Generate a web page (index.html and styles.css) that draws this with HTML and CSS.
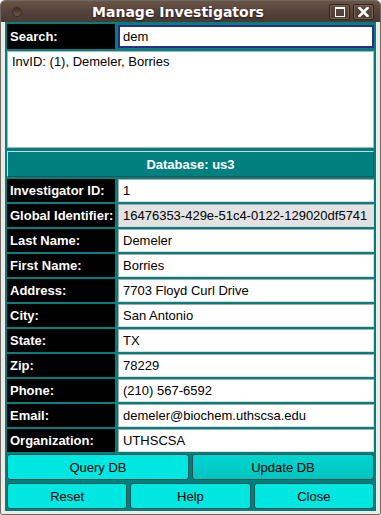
FILE: index.html
```html
<!DOCTYPE html>
<html lang="en">
<head>
    <meta charset="UTF-8">
    <meta name="viewport" content="width=device-width, initial-scale=1.0">
    <title>Manage Investigators</title>
    <link rel="stylesheet" href="styles.css">
</head>
<body>
    <div class="window">
        <div class="titlebar">
            <span class="menu-dot"></span>
            <span class="title">Manage Investigators</span>
            <div class="win-buttons">
                <span class="win-btn"><span class="max-box"></span></span>
                <span class="win-btn">
                    <svg width="11" height="10" viewBox="0 0 11 10">
                        <path d="M1.5 1 L9.5 9 M9.5 1 L1.5 9" stroke="#ffffff" stroke-width="2.6" stroke-linecap="square" fill="none"/>
                    </svg>
                </span>
            </div>
        </div>

        <div class="frame">
            <div class="panel">
                <div class="row search-row">
                    <span class="label">Search:</span>
                    <div class="field search-field">dem</div>
                </div>

                <div class="list-box">
                    <div class="list-item">InvID: (1), Demeler, Borries</div>
                </div>

                <div class="db-header">Database: us3</div>

                <div class="rows">
                    <div class="row"><span class="label">Investigator ID:</span><div class="field">1</div></div>
                    <div class="row"><span class="label">Global Identifier:</span><div class="field readonly">16476353-429e-51c4-0122-129020df5741</div></div>
                    <div class="row"><span class="label">Last Name:</span><div class="field">Demeler</div></div>
                    <div class="row"><span class="label">First Name:</span><div class="field">Borries</div></div>
                    <div class="row"><span class="label">Address:</span><div class="field">7703 Floyd Curl Drive</div></div>
                    <div class="row"><span class="label">City:</span><div class="field">San Antonio</div></div>
                    <div class="row"><span class="label">State:</span><div class="field">TX</div></div>
                    <div class="row"><span class="label">Zip:</span><div class="field">78229</div></div>
                    <div class="row"><span class="label">Phone:</span><div class="field">(210) 567-6592</div></div>
                    <div class="row"><span class="label">Email:</span><div class="field">demeler@biochem.uthscsa.edu</div></div>
                    <div class="row"><span class="label">Organization:</span><div class="field">UTHSCSA</div></div>
                </div>

                <div class="buttons two">
                    <button>Query DB</button>
                    <button class="hover">Update DB</button>
                </div>
                <div class="buttons three">
                    <button>Reset</button>
                    <button>Help</button>
                    <button>Close</button>
                </div>
            </div>
        </div>
    </div>
</body>
</html>
```

FILE: styles.css
```css
body {
    margin: 0;
    padding: 0;
    background-color: #ffffff;
    font-family: "Liberation Sans", Arial, sans-serif;
    font-size: 13px;
}

.window {
    width: 381px;
    height: 515px;
    box-sizing: border-box;
    border: 1px solid #6e6a64;
    border-radius: 5px 5px 2px 2px;
    background-color: #edebe7;
    overflow: hidden;
    display: flex;
    flex-direction: column;
}

.titlebar {
    height: 21px;
    flex: none;
    position: relative;
    display: flex;
    align-items: center;
    justify-content: center;
    background: linear-gradient(#6a5446, #55423a 50%, #4b3a32);
}

.menu-dot {
    position: absolute;
    left: 11px;
    top: 6px;
    width: 10px;
    height: 10px;
    border-radius: 50%;
    background: linear-gradient(#3e2f27, #6c5848);
    border: 1px solid #3a2c25;
    box-sizing: border-box;
}

.title {
    color: #ffffff;
    font-family: "DejaVu Sans", sans-serif;
    font-weight: bold;
    font-size: 14px;
    text-shadow: 0 1px 2px #1e1410;
    margin-left: -25px;
}

.win-buttons {
    position: absolute;
    right: 6px;
    top: 3px;
    display: flex;
    gap: 3px;
}

.win-btn {
    width: 21px;
    height: 16px;
    box-sizing: border-box;
    border: 1px solid #2e231e;
    box-shadow: inset 0 0 0 1px #7a6456;
    border-radius: 2px;
    display: flex;
    align-items: center;
    justify-content: center;
}

.max-box {
    width: 8px;
    height: 7px;
    border: 1px solid #ffffff;
    border-top-width: 2px;
}

.frame {
    flex: 1;
    padding: 0 4px 3px 4px;
    display: flex;
}

.panel {
    flex: 1;
    background-color: #007f7f;
    padding: 2px;
    display: flex;
    flex-direction: column;
}

.row {
    display: flex;
    gap: 3px;
    height: 23px;
}

.search-row {
    height: 25px;
}

.label {
    width: 108px;
    flex: none;
    background-color: #000000;
    color: #ffffff;
    font-weight: bold;
    display: flex;
    align-items: center;
    padding-left: 3px;
    box-sizing: border-box;
    white-space: nowrap;
}

.field {
    flex: 1;
    background-color: #ffffff;
    border: 1px solid #a9a9a9;
    border-right-color: #dcdcdc;
    border-bottom-color: #dcdcdc;
    box-sizing: border-box;
    display: flex;
    align-items: center;
    padding-left: 4px;
    color: #000000;
    white-space: nowrap;
    overflow: hidden;
}

.field.readonly {
    background-color: #e2e2e2;
}

.search-field {
    border: 2px solid #2e2a8c;
    margin: 1px 0;
    padding-left: 3px;
}

.list-box {
    height: 97px;
    margin-top: 2px;
    background-color: #ffffff;
    border: 1px solid #b4b4b4;
    box-sizing: border-box;
    padding: 2px 4px;
}

.db-header {
    height: 26px;
    margin-top: 3px;
    box-sizing: border-box;
    border: 1px solid #c8dcdc;
    border-right-color: #2f4f4f;
    border-bottom-color: #2f4f4f;
    color: #ffffff;
    font-weight: bold;
    display: flex;
    align-items: center;
    justify-content: center;
}

.rows {
    margin-top: 2px;
    display: flex;
    flex-direction: column;
    gap: 2px;
}

.buttons {
    display: flex;
    gap: 3px;
    height: 26px;
}

.buttons.two {
    margin-top: 2px;
}

.buttons.three {
    margin-top: 3px;
}

.buttons button {
    flex: 1;
    margin: 0;
    font-family: "Liberation Sans", Arial, sans-serif;
    font-size: 13px;
    color: #000000;
    background-color: #00e6e0;
    border: 1px solid #0a5454;
    border-radius: 3px;
    cursor: pointer;
}

.buttons button.hover {
    background: linear-gradient(#00d6d2, #00c4c0);
    border-color: #2a5050;
}
```
